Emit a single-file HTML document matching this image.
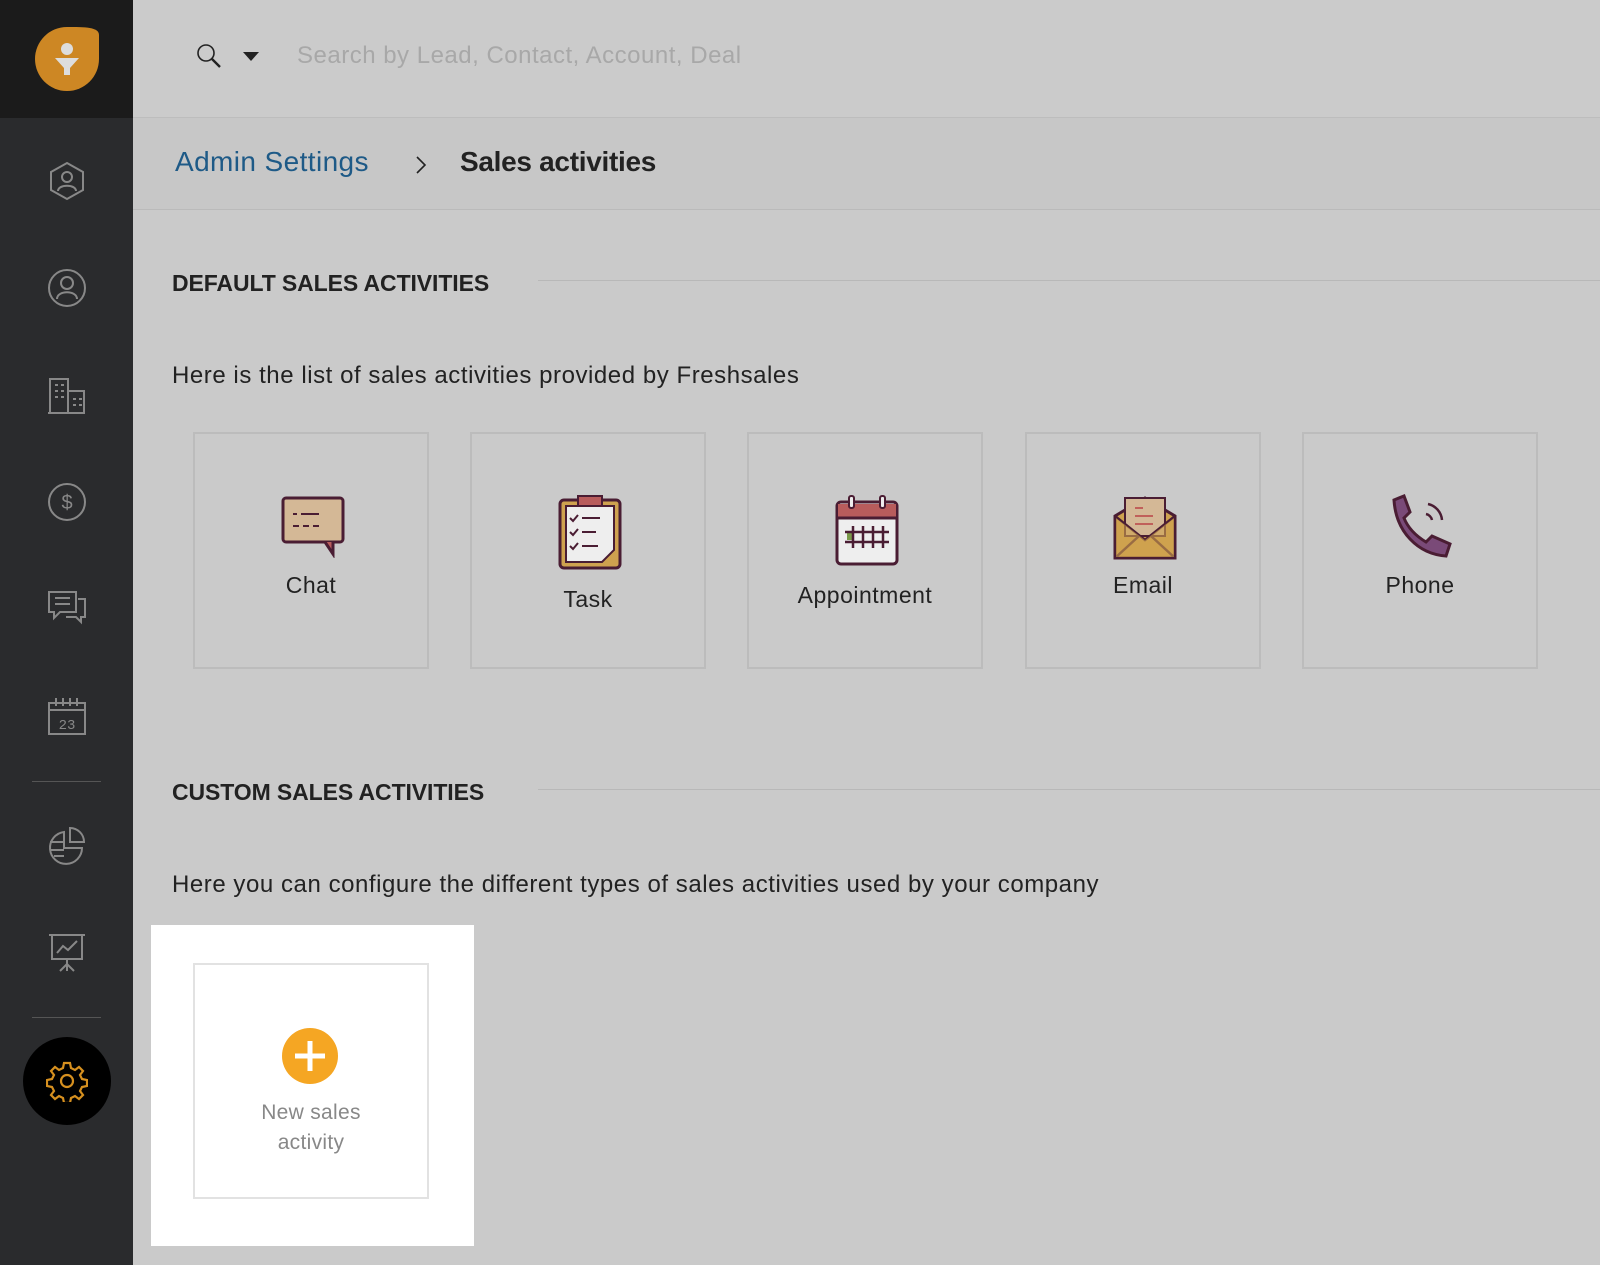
<!DOCTYPE html>
<html><head><style>
*{margin:0;padding:0;box-sizing:border-box}
body{width:1600px;height:1265px;background:#cacaca;font-family:"Liberation Sans",sans-serif;position:relative;overflow:hidden}
.sb{position:absolute;left:0;top:0;width:133px;height:1265px;background:#2a2b2d}
.sbtop{position:absolute;left:0;top:0;width:133px;height:118px;background:#1b1b1b}
.ic{position:absolute;left:46px;width:42px;height:42px}
.sep{position:absolute;left:32px;width:69px;height:1px;background:#555}
.hdr{position:absolute;left:133px;top:0;right:0;height:118px;background:#cbcbcb;border-bottom:1px solid #bdbdbd}
.bc{position:absolute;left:133px;top:118px;right:0;height:92px;background:#c7c7c7;border-bottom:1px solid #bababa}
.t{position:absolute;white-space:nowrap}
.h2{font-size:23px;font-weight:bold;color:#222;letter-spacing:-0.1px}
.line{position:absolute;height:1px;background:#b8b8b8;right:0}
.p{font-size:24px;color:#222;letter-spacing:0.55px}
.card{position:absolute;top:432px;width:236px;height:237px;border:2px solid #bcbcbc;background:#cacaca}
.card span{position:absolute;left:0;right:0;text-align:center;font-size:23px;color:#222;letter-spacing:0.5px}
.card svg{position:absolute;left:86px}
</style></head><body>
<div class="sb"></div><div class="sbtop"></div>
<svg style="position:absolute;left:33px;top:25px" width="68" height="68" viewBox="0 0 68 68"><path d="M34 2 C52 2 66 2 66 10 V34 A32 32 0 1 1 34 2Z" fill="#cd8724"/><circle cx="34" cy="24" r="6" fill="#ddd"/><path d="M22 33 H46 L37 43 V50 H31 V43Z" fill="#ddd"/></svg>
<svg class="ic" style="top:160px" viewBox="0 0 42 42" fill="none" stroke="#888" stroke-width="2"><path d="M21 3 L37 12 V30 L21 39 L5 30 V12Z"/><circle cx="21" cy="17" r="5"/><path d="M12 31 C12 24 30 24 30 31"/></svg>
<svg class="ic" style="top:267px" viewBox="0 0 42 42" fill="none" stroke="#888" stroke-width="2"><circle cx="21" cy="21" r="18"/><circle cx="21" cy="16" r="6"/><path d="M11 32 C11 23 31 23 31 32"/></svg>
<svg class="ic" style="top:374px" viewBox="0 0 42 42" fill="none" stroke="#888" stroke-width="2"><path d="M4 39 V5 H22 V39 M22 17 H38 V39 H2"/><path d="M9 11h3M15 11h3M9 17h3M15 17h3M9 23h3M15 23h3M27 25h3M33 25h3M27 31h3M33 31h3"/></svg>
<svg class="ic" style="top:481px" viewBox="0 0 42 42" fill="none" stroke="#888" stroke-width="2"><circle cx="21" cy="21" r="18"/><text x="21" y="28" font-size="20" text-anchor="middle" fill="#888" stroke="none" font-family="Liberation Sans">$</text></svg>
<svg class="ic" style="top:587px" viewBox="0 0 42 42" fill="none" stroke="#888" stroke-width="2"><path d="M3 5 H30 V25 H14 L8 31 V25 H3Z M9 11h15M9 17h15M32 12 H39 V30 H35 V35 L30 30 H20"/></svg>
<svg class="ic" style="top:695px" viewBox="0 0 42 42" fill="none" stroke="#888" stroke-width="2"><path d="M3 8 H39 V39 H3Z M3 15H39 M10 3v8M17 3v8M24 3v8M31 3v8"/><text x="21" y="34" font-size="14" text-anchor="middle" fill="#888" stroke="none" font-family="Liberation Mono">23</text></svg>
<div class="sep" style="top:781px"></div>
<svg class="ic" style="top:824px" viewBox="0 0 42 42" fill="none" stroke="#888" stroke-width="2"><path d="M18 8 A16 16 0 1 0 36 24 H18Z M24 4 A14 14 0 0 1 38 18 H24Z M4 18h14M4 26h14M8 32h10"/></svg>
<svg class="ic" style="top:931px" viewBox="0 0 42 42" fill="none" stroke="#888" stroke-width="2"><path d="M3 4 H39 M6 4 V28 H36 V4 M21 28 V40 M14 40 L21 33 L28 40 M11 22 L17 15 L22 19 L31 10"/></svg>
<div class="sep" style="top:1017px"></div>
<div style="position:absolute;left:23px;top:1037px;width:88px;height:88px;border-radius:50%;background:#000"></div>
<svg style="position:absolute;left:46px;top:1060px" width="42" height="42" viewBox="0 0 42 42" fill="none" stroke="#d6901f" stroke-width="2.2"><path d="M18 3h6l1 5 4 2 4-3 4 4-3 4 2 4 5 1v6l-5 1-2 4 3 4-4 4-4-3-4 2-1 5h-6l-1-5-4-2-4 3-4-4 3-4-2-4-5-1v-6l5-1 2-4-3-4 4-4 4 3 4-2z"/><circle cx="21" cy="21" r="6"/></svg>

<div class="hdr"></div>
<svg style="position:absolute;left:195px;top:42px" width="28" height="28" viewBox="0 0 28 28" fill="none" stroke="#222" stroke-width="1.6"><circle cx="11" cy="11" r="8"/><path d="M17 17 L25 25" stroke-width="2.4"/></svg>
<svg style="position:absolute;left:243px;top:52px" width="16" height="10"><path d="M0 0H16L8 9Z" fill="#222"/></svg>
<div class="t" style="left:297px;top:42px;font-size:24px;color:#a8a8a8;letter-spacing:0.5px">Search by Lead, Contact, Account, Deal</div>
<div class="bc"></div>
<div class="t" style="left:175px;top:146px;font-size:28px;color:#1e5a87;letter-spacing:0.4px">Admin Settings</div>
<svg style="position:absolute;left:414px;top:154px" width="14" height="22" fill="none" stroke="#222" stroke-width="1.6"><path d="M3 3 L11 11 L3 19"/></svg>
<div class="t" style="left:460px;top:146px;font-size:28px;color:#222;font-weight:bold;letter-spacing:-0.3px">Sales activities</div>

<div class="t h2" style="left:172px;top:270px">DEFAULT SALES ACTIVITIES</div>
<div class="line" style="left:538px;top:280px"></div>
<div class="t p" style="left:172px;top:362px">Here is the list of sales activities provided by Freshsales</div>

<div class="card" style="left:193px"><svg style="top:62px" width="64" height="62" viewBox="0 0 64 62"><rect x="2" y="2" width="60" height="44" rx="3" fill="#d4b896" stroke="#4a1d33" stroke-width="3"/><path d="M44 46 L52 58 V46" fill="#b85c5c" stroke="#4a1d33" stroke-width="3"/><path d="M12 18h4M20 18h18M12 30h6M22 30h6M32 30h6" stroke="#4a1d33" stroke-width="2"/></svg><span style="top:138px">Chat</span></div>
<div class="card" style="left:470px"><svg style="top:60px" width="64" height="76" viewBox="0 0 64 76"><rect x="2" y="6" width="60" height="68" rx="4" fill="#cfa24f" stroke="#4a1d33" stroke-width="3"/><path d="M8 12 H56 V56 L44 68 H8Z" fill="#eee" stroke="#4a1d33" stroke-width="2"/><rect x="20" y="2" width="24" height="10" fill="#b85c5c" stroke="#4a1d33" stroke-width="2"/><path d="M12 24l3 3 5-6M24 24h18M12 38l3 3 5-6M24 38h14M12 52l3 3 5-6M24 52h16" stroke="#4a1d33" stroke-width="2" fill="none"/></svg><span style="top:152px">Task</span></div>
<div class="card" style="left:747px"><svg style="top:60px" width="64" height="74" viewBox="0 0 64 74"><rect x="2" y="8" width="60" height="62" rx="4" fill="#eee" stroke="#4a1d33" stroke-width="3"/><path d="M3 10 H61 V24 H3Z" fill="#b85c5c"/><path d="M2 24h60" stroke="#4a1d33" stroke-width="3"/><rect x="14" y="2" width="5" height="12" rx="2" fill="#eee" stroke="#4a1d33" stroke-width="2"/><rect x="45" y="2" width="5" height="12" rx="2" fill="#eee" stroke="#4a1d33" stroke-width="2"/><rect x="12" y="38" width="6" height="8" fill="#7a9a4a"/><path d="M10 38h44M10 48h44M18 32v22M28 32v22M38 32v22M48 32v22" stroke="#4a1d33" stroke-width="2.5"/></svg><span style="top:148px">Appointment</span></div>
<div class="card" style="left:1025px"><svg style="top:62px" width="64" height="64" viewBox="0 0 64 64"><path d="M2 20 L32 2 L62 20 V62 H2Z" fill="#cfa24f" stroke="#4a1d33" stroke-width="3"/><rect x="12" y="2" width="40" height="38" fill="#d4b896" stroke="#4a1d33" stroke-width="2"/><path d="M22 12h8M22 20h18M22 28h18" stroke="#c0605a" stroke-width="2"/><path d="M2 20 L32 44 L62 20 M2 62 L26 40 M62 62 L38 40" fill="none" stroke="#4a1d33" stroke-width="2.5"/><path d="M3 22 L32 44 L61 22 V61 H3Z" fill="#cfa24f" opacity=".6"/></svg><span style="top:138px">Email</span></div>
<div class="card" style="left:1302px"><svg style="top:60px" width="64" height="64" viewBox="0 0 64 64"><path d="M4 6 L14 2 L20 18 L14 24 C18 34 26 42 36 48 L42 42 L60 50 L56 62 C28 60 6 38 4 6Z" fill="#7a4a78" stroke="#4a1d33" stroke-width="3"/><path d="M38 10 A18 18 0 0 1 52 26 M36 20 A8 8 0 0 1 42 26" fill="none" stroke="#4a1d33" stroke-width="2.5"/></svg><span style="top:138px">Phone</span></div>

<div class="t h2" style="left:172px;top:779px">CUSTOM SALES ACTIVITIES</div>
<div class="line" style="left:538px;top:789px"></div>
<div class="t p" style="left:172px;top:871px">Here you can configure the different types of sales activities used by your company</div>

<div style="position:absolute;left:151px;top:925px;width:323px;height:321px;background:#fff"></div>
<div style="position:absolute;left:193px;top:963px;width:236px;height:236px;border:2px solid #e2e2e2;background:#fff"></div>
<svg style="position:absolute;left:282px;top:1028px" width="56" height="56" viewBox="0 0 56 56"><circle cx="28" cy="28" r="28" fill="#f5a623"/><path d="M28 13v30M13 28h30" stroke="#fff" stroke-width="5"/></svg>
<div class="t" style="left:193px;width:236px;text-align:center;top:1098px;font-size:21px;color:#888;line-height:30px;letter-spacing:0.3px">New sales<br>activity</div>
</body></html>
